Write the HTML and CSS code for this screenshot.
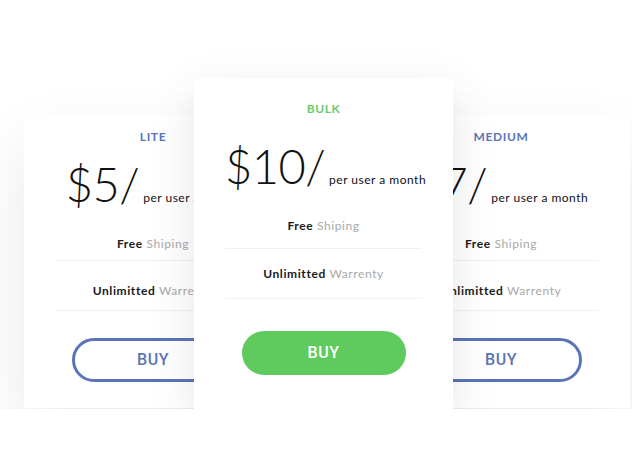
FILE: index.html
```html
<!DOCTYPE html>
<html lang="en">
<head>
  <meta charset="UTF-8" />
  <meta name="viewport" content="width=device-width, initial-scale=1.0" />
  <title>Pricing</title>
  <link rel="stylesheet" href="styles.css">
</head>
<body>
  <div class="pricing">
    <div class="plan plan-side">
      <h3 class="plan-name">LITE</h3>
      <div class="price"><span class="amount">$5/</span><span class="per">per user a month</span></div>
      <ul class="features">
        <li><b>Free</b> Shiping</li>
        <li><b>Unlimitted</b> Warrenty</li>
      </ul>
      <div class="buy">BUY</div>
    </div>

    <div class="plan plan-main">
      <h3 class="plan-name">BULK</h3>
      <div class="price"><span class="amount">$10/</span><span class="per">per user a month</span></div>
      <ul class="features">
        <li><b>Free</b> Shiping</li>
        <li><b>Unlimitted</b> Warrenty</li>
      </ul>
      <div class="buy">BUY</div>
    </div>

    <div class="plan plan-side plan-right">
      <h3 class="plan-name">MEDIUM</h3>
      <div class="price"><span class="amount">$7/</span><span class="per">per user a month</span></div>
      <ul class="features">
        <li><b>Free</b> Shiping</li>
        <li><b>Unlimitted</b> Warrenty</li>
      </ul>
      <div class="buy">BUY</div>
    </div>
  </div>
</body>
</html>
```

FILE: styles.css
```css
body {
  margin: 0;
  background: #fff;
  font-family: Lato, "Noto Sans", sans-serif;
  color: #1a1a1a;
}
.pricing {
  display: flex;
  align-items: flex-start;
  padding: 78px 0 0 24px;
}
.plan {
  background: #fff;
  text-align: center;
  box-sizing: border-box;
  box-shadow: 0 30px 60px rgba(0, 0, 0, 0.09);
}
.plan-side {
  width: 258px;
  height: 294px;
  margin-top: 36px;
  padding: 16px 31px 0;
}
.plan-right {
  margin-left: -81px;
}
.plan-main {
  position: relative;
  z-index: 2;
  width: 259px;
  height: 331px;
  margin-left: -88px;
  padding: 24px 31px 0;
  box-shadow: 0 14px 44px rgba(0, 0, 0, 0.1);
}
.plan-name {
  margin: 0;
  font-size: 12px;
  line-height: 14px;
  font-weight: 700;
  letter-spacing: 0.6px;
  color: #5b74b8;
}
.plan-main .plan-name {
  color: #6acb68;
}

/* price row */
.price {
  display: flex;
  align-items: baseline;
  justify-content: center;
  white-space: nowrap;
  height: 52px;
  margin-top: 14px;
}
.plan-main .price {
  margin-top: 24px;
  padding-left: 4px;
}
.amount {
  font-size: 47px;
  font-weight: 300;
  line-height: 52px;
  letter-spacing: -0.5px;
  color: #111;
}
.per {
  font-size: 12px;
  margin-left: 4px;
  letter-spacing: 0.5px;
  color: #111;
}

/* features */
.features {
  list-style: none;
  margin: 0;
  padding: 0;
}
.features li {
  font-size: 12px;
  line-height: 16px;
  letter-spacing: 0.6px;
  color: #a8a8a8;
  border-bottom: 1px solid #f1f1f1;
}
.features b {
  font-weight: 700;
  color: #1a1a1a;
}
.plan-side .features li:first-child {
  padding: 26px 0 8px;
}
.plan-side .features li:last-child {
  padding: 22px 0 11px;
}
.plan-main .features li:first-child {
  padding: 26px 0 14px;
}
.plan-main .features li:last-child {
  padding: 17px 0 16px;
}

/* buttons */
.buy {
  margin: 27px auto 0;
  width: 162px;
  height: 44px;
  box-sizing: border-box;
  border: 3px solid #5b74b8;
  border-radius: 22px;
  color: #5b74b8;
  font-family: Roboto, "Liberation Sans", sans-serif;
  font-weight: 500;
  font-size: 16px;
  letter-spacing: 0.5px;
  line-height: 38px;
}
.plan-main .buy {
  margin-top: 32px;
  width: 164px;
  border: none;
  background: #5fcb5e;
  color: #fff;
  line-height: 44px;
}
```
